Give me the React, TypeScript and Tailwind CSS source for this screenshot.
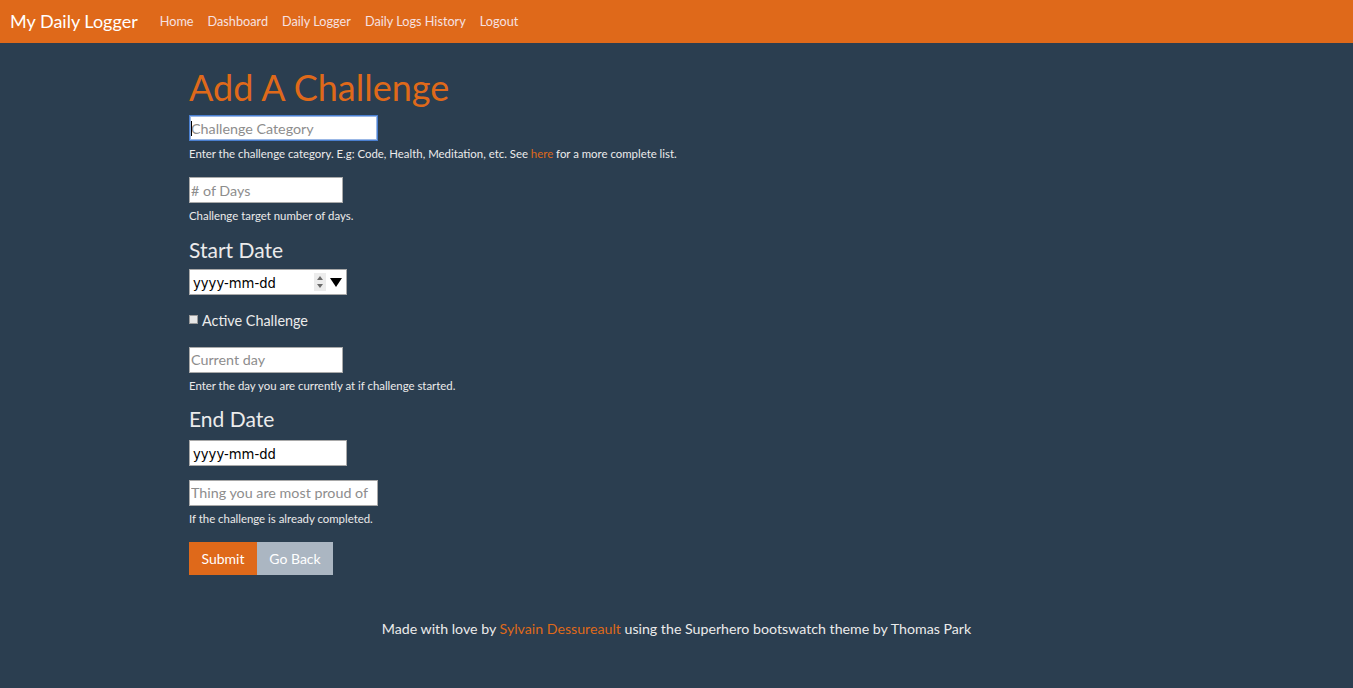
import React from 'react';

const DateBox = ({ spinner }: { spinner?: boolean }) => (
  <div className="flex items-center w-[158px] h-[26px] bg-white border border-[#a9a9a9] pl-[3px] pr-[3px]">
    <span className="flex-1 pt-[3px] text-[13.2px] text-black font-['DejaVu_Sans',sans-serif] leading-none">yyyy-mm-dd</span>
    {spinner && (
      <>
        <svg width="12" height="18" viewBox="0 0 12 18" className="bg-[#ececec]">
          <path d="M3 7 L6 3 L9 7 Z" fill="#6b6b6b" />
          <path d="M3 11 L6 15 L9 11 Z" fill="#6b6b6b" />
        </svg>
        <svg width="14" height="12" viewBox="0 0 14 12" className="ml-[3px]">
          <path d="M1 2 L13 2 L7 11 Z" fill="#000" />
        </svg>
      </>
    )}
  </div>
);

const TextBox = ({ placeholder, width, focused }: { placeholder: string; width: string; focused?: boolean }) => (
  <div className="relative w-fit">
    <input
      type="text"
      placeholder={placeholder}
      className={`${width} h-[26px] bg-white px-[1px] text-[14.3px] text-black placeholder:text-[#8d8d8d] outline-none border ${
        focused ? 'border-[#4a7fd0] shadow-[inset_0_0_0_1px_#9bb8e6]' : 'border-[#a9a9a9]'
      }`}
    />
    {focused && <span className="absolute left-[2px] top-[6px] w-[1px] h-[15px] bg-black" />}
  </div>
);

const Help = ({ children }: { children: React.ReactNode }) => (
  <p className="mt-[5px] text-[11.4px] text-[#ebebeb] leading-[16px]">{children}</p>
);

const App = () => {
  const navigationLinks = ['Home', 'Dashboard', 'Daily Logger', 'Daily Logs History', 'Logout'];

  return (
    <div className="min-h-[688px] bg-[#2b3e50] font-['Lato',sans-serif] text-[#ebebeb]">
      {/* Navbar */}
      <nav className="h-[43px] bg-[#df691a] flex items-center px-[10px]">
        <span className="text-[18px] text-white mr-[22px]">My Daily Logger</span>
        <div className="flex gap-[14px]">
          {navigationLinks.map((l) => (
            <a key={l} href="#" className="text-[12.7px] text-[#f6e1e1]">
              {l}
            </a>
          ))}
        </div>
      </nav>

      {/* Form */}
      <div className="pl-[189px] pt-[22px]">
        <h1 className="text-[36px] leading-[44px] text-[#df691a]">Add A Challenge</h1>

        <div className="mt-[6px]">
          <TextBox placeholder="Challenge Category" width="w-[189px]" focused />
          <Help>
            Enter the challenge category. E.g: Code, Health, Meditation, etc. See{' '}
            <a href="#" className="text-[#df691a]">here</a> for a more complete list.
          </Help>
        </div>

        <div className="mt-[15px]">
          <TextBox placeholder="# of Days" width="w-[154px]" />
          <Help>Challenge target number of days.</Help>
        </div>

        <h3 className="mt-[13px] text-[21px] leading-[26px] text-[#ebebeb]">Start Date</h3>
        <div className="mt-[6px]">
          <DateBox spinner />
        </div>

        <label className="mt-[15px] flex items-center gap-[4px] text-[14.4px]">
          <span className="w-[9px] h-[9px] bg-[#e6e6e6] border border-[#9a9a9a] mt-[-3px]" />
          Active Challenge
        </label>

        <div className="mt-[15px]">
          <TextBox placeholder="Current day" width="w-[154px]" />
          <Help>Enter the day you are currently at if challenge started.</Help>
        </div>

        <h3 className="mt-[12px] text-[21px] leading-[26px] text-[#ebebeb]">End Date</h3>
        <div className="mt-[8px]">
          <DateBox />
        </div>

        <div className="mt-[14px]">
          <TextBox placeholder="Thing you are most proud of" width="w-[189px]" />
          <Help>If the challenge is already completed.</Help>
        </div>

        <div className="mt-[15px] flex">
          <button className="h-[33px] w-[68px] bg-[#df691a] text-white text-[14px]">Submit</button>
          <button className="h-[33px] w-[76px] bg-[#abb6c2] text-white text-[14px]">Go Back</button>
        </div>
      </div>

      {/* Footer */}
      <footer className="mt-[43px] text-center text-[14.2px] text-[#ebebeb]">
        Made with love by <a href="#" className="text-[#df691a]">Sylvain Dessureault</a> using the Superhero bootswatch
        theme by Thomas Park
      </footer>
    </div>
  );
};

export default App;
